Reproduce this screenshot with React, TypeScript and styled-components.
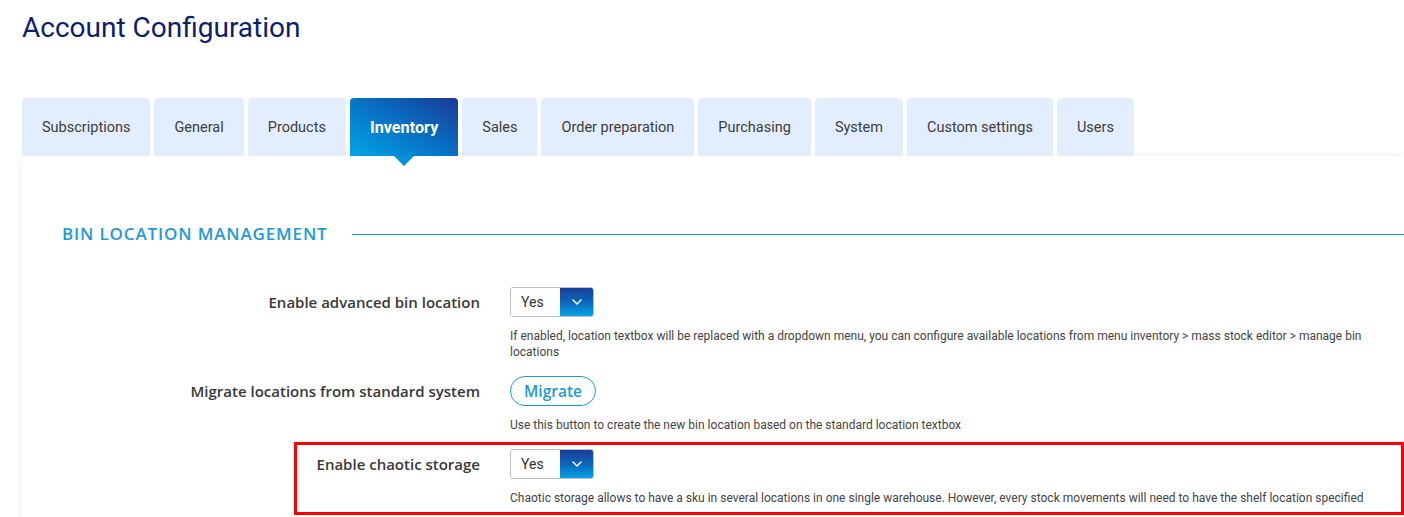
import React from "react";
import styled, { createGlobalStyle } from "styled-components";

const Global = createGlobalStyle`
  html, body { margin: 0; padding: 0; background: #fff; }
  body { font-family: Roboto, "Liberation Sans", sans-serif; overflow: hidden; }
  * { box-sizing: border-box; }
`;

const Page = styled.div`
  padding: 11px 0 0 22px;
  width: 1404px;
  height: 517px;
  overflow: hidden;
`;

const Title = styled.h1`
  margin: 0;
  font-family: Roboto, sans-serif;
  font-weight: 400;
  font-size: 28px;
  line-height: 33px;
  color: #0c1d6e;
`;

const TabBar = styled.div`
  display: flex;
  gap: 4px;
  margin-top: 54px;
  height: 58px;
  position: relative;
  z-index: 2;
`;

const Tab = styled.div<{ $active?: boolean }>`
  position: relative;
  display: flex;
  align-items: center;
  padding: 0 20px;
  height: 58px;
  border-radius: 4px 4px 0 0;
  font-size: ${(p) => (p.$active ? "16.2px" : "14.5px")};
  color: ${(p) => (p.$active ? "#fff" : "#3d3d3d")};
  font-weight: ${(p) => (p.$active ? 700 : 400)};
  background: ${(p) =>
    p.$active ? "linear-gradient(30deg, #00a5e8 0%, #0a6cc0 55%, #1a3a96 100%)" : "#e2eefd"};
  &::after {
    content: "";
    display: ${(p) => (p.$active ? "block" : "none")};
    position: absolute;
    left: 50%;
    bottom: -10px;
    margin-left: -10px;
    border-left: 10px solid transparent;
    border-right: 10px solid transparent;
    border-top: 10px solid #0892d6;
  }
`;

const Panel = styled.div`
  position: relative;
  z-index: 1;
  background: #fff;
  box-shadow: 0 0 6px rgba(0, 0, 0, 0.08);
  padding: 68px 32px 40px 40px;
  height: 400px;
`;

const SectionHeader = styled.div`
  display: flex;
  align-items: center;
  gap: 24px;
  margin-right: -32px;
  margin-bottom: 43px;
`;

const SectionTitle = styled.h2`
  margin: 0;
  font-family: "Open Sans", sans-serif;
  font-weight: 600;
  font-size: 17px;
  line-height: 20px;
  letter-spacing: 0.85px;
  color: #1e9ad9;
  text-transform: uppercase;
  white-space: nowrap;
`;

const SectionLine = styled.div`
  flex: 1;
  height: 1px;
  background: #1e9ad9;
`;

const Row = styled.div<{ $highlight?: boolean }>`
  position: relative;
  display: grid;
  grid-template-columns: 458px 862px;
  column-gap: 30px;
  margin-left: -40px;
  margin-bottom: 16px;
  &::after {
    content: "";
    display: ${(p) => (p.$highlight ? "block" : "none")};
    position: absolute;
    left: 272px;
    right: -32px;
    top: -7px;
    bottom: -9px;
    border: 3px solid #f00;
    pointer-events: none;
  }
`;

const Label = styled.div`
  grid-column: 1;
  text-align: right;
  font-family: "Open Sans", sans-serif;
  font-weight: 600;
  font-size: 15px;
  line-height: 30px;
  color: #383838;
`;

const Control = styled.div`
  grid-column: 2;
  display: flex;
  flex-direction: column;
  align-items: flex-start;
`;

const Select = styled.div`
  display: flex;
  width: 84px;
  height: 30px;
  border: 1px solid #bdbdbd;
  border-radius: 3px;
  overflow: hidden;
`;

const SelectValue = styled.div`
  flex: 1;
  display: flex;
  align-items: center;
  padding-left: 10px;
  font-size: 14px;
  color: #333;
  background: #fff;
`;

const SelectArrow = styled.div`
  width: 33px;
  display: flex;
  align-items: center;
  justify-content: center;
  background: linear-gradient(180deg, #1a3c98 0%, #0a6cc0 55%, #02a3e6 100%);
`;

const PillButton = styled.button`
  width: 86px;
  height: 30px;
  border: 1px solid #1e9ad9;
  border-radius: 15px;
  background: #fff;
  font-family: "Open Sans", sans-serif;
  font-weight: 600;
  font-size: 15.5px;
  color: #1e9ad9;
  padding: 0;
  cursor: pointer;
`;

const Help = styled.p`
  margin: 11px 0 0;
  font-size: 12px;
  line-height: 16px;
  color: #444;
`;

const Chevron = () => (
  <svg width="10" height="6" viewBox="0 0 10 6" fill="none">
    <path d="M1 1l4 4 4-4" stroke="#fff" strokeWidth="1.5" strokeLinecap="round" strokeLinejoin="round" />
  </svg>
);

const tabs = [
  "Subscriptions",
  "General",
  "Products",
  "Inventory",
  "Sales",
  "Order preparation",
  "Purchasing",
  "System",
  "Custom settings",
  "Users",
];

const YesSelect = () => (
  <Select>
    <SelectValue>Yes</SelectValue>
    <SelectArrow>
      <Chevron />
    </SelectArrow>
  </Select>
);

export default function App() {
  return (
    <>
      <Global />
      <Page>
        <Title>Account Configuration</Title>
        <TabBar>
          {tabs.map((t) => (
            <Tab key={t} $active={t === "Inventory"}>
              {t}
            </Tab>
          ))}
        </TabBar>
        <Panel>
          <SectionHeader>
            <SectionTitle>Bin location management</SectionTitle>
            <SectionLine />
          </SectionHeader>
          <Row>
            <Label>Enable advanced bin location</Label>
            <Control>
              <YesSelect />
              <Help>
                If enabled, location textbox will be replaced with a dropdown menu, you can configure available
                locations from menu inventory &gt; mass stock editor &gt; manage bin locations
              </Help>
            </Control>
          </Row>
          <Row>
            <Label>Migrate locations from standard system</Label>
            <Control>
              <PillButton>Migrate</PillButton>
              <Help>Use this button to create the new bin location based on the standard location textbox</Help>
            </Control>
          </Row>
          <Row $highlight>
            <Label>Enable chaotic storage</Label>
            <Control>
              <YesSelect />
              <Help>
                Chaotic storage allows to have a sku in several locations in one single warehouse. However, every
                stock movements will need to have the shelf location specified
              </Help>
            </Control>
          </Row>
        </Panel>
      </Page>
    </>
  );
}
